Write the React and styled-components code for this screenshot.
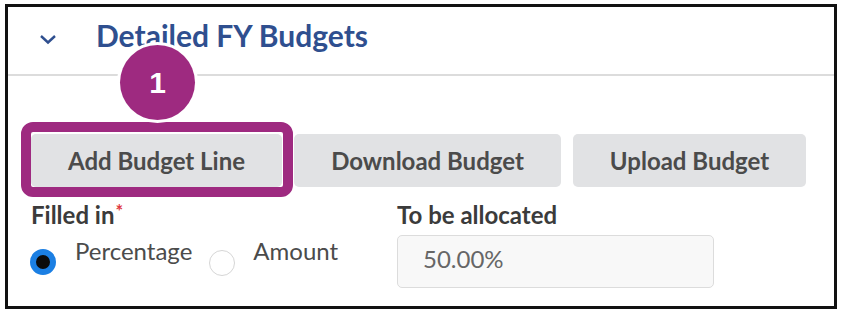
import React from "react";
import styled, { createGlobalStyle } from "styled-components";

const GlobalStyle = createGlobalStyle`
  html, body {
    margin: 0;
    padding: 0;
    background: #ffffff;
    font-family: Lato, "Noto Sans", sans-serif;
  }
`;

const Page = styled.div`
  width: 843px;
  height: 318px;
  padding: 4px 0 0 5px;
  box-sizing: border-box;
`;

const Frame = styled.div`
  position: relative;
  width: 832px;
  height: 305px;
  border: 3px solid #111;
  box-sizing: border-box;
  overflow: hidden;
`;

const Header = styled.div`
  display: flex;
  align-items: flex-start;
  height: 67px;
  border-bottom: 2px solid #dcdcdc;
  padding-left: 31px;
  box-sizing: content-box;
`;

const Chevron = styled.svg`
  width: 18px;
  height: 12px;
  margin-top: 26px;
  margin-right: 39px;
`;

const Title = styled.h2`
  margin: 10px 0 0;
  font-size: 30px;
  line-height: 36px;
  font-weight: 700;
  color: #2f4f8f;
`;

const Body = styled.div`
  padding: 58px 0 0 23px;
`;

const ButtonRow = styled.div`
  display: flex;
  gap: 12px;
`;

const Button = styled.button`
  width: ${(p) => p.$w}px;
  height: 53px;
  border: none;
  border-radius: 5px;
  background: #e1e2e4;
  color: #4b4b4b;
  font-family: Lato, "Noto Sans", sans-serif;
  font-size: 24px;
  font-weight: 700;
  padding: 0;
`;

const FieldRow = styled.div`
  display: flex;
  margin-top: 15px;
`;

const Field = styled.div`
  width: ${(p) => p.$w}px;
  display: flex;
  flex-direction: column;
`;

const Label = styled.div`
  font-size: 24px;
  font-weight: 700;
  color: #3b3b3b;
  line-height: 26px;
`;

const Required = styled.span`
  color: #e0393e;
  font-size: 18px;
  vertical-align: top;
  line-height: 18px;
  margin-left: 1px;
`;

const RadioGroup = styled.div`
  display: flex;
  align-items: flex-start;
  margin-top: 10px;
  margin-left: -1px;
`;

const RadioOption = styled.label`
  display: flex;
  align-items: flex-start;
  margin-right: 17px;
`;

const RadioDot = styled.span`
  width: 26px;
  height: 26px;
  margin-top: ${(p) => (p.$on ? 11 : 12)}px;
  margin-right: ${(p) => (p.$on ? 19 : 18)}px;
  border-radius: 50%;
  box-sizing: border-box;
  background: ${(p) => (p.$on ? "#0b0b0b" : "#ffffff")};
  border: ${(p) => (p.$on ? "6px solid #1b7fe3" : "1.5px solid #d6d6d6")};
  flex-shrink: 0;
`;

const RadioText = styled.span`
  font-size: 24px;
  color: #4b4b4b;
  line-height: 26px;
`;

const Input = styled.div`
  width: 317px;
  height: 53px;
  margin-top: 7px;
  box-sizing: border-box;
  border: 1.5px solid #dcdcdc;
  border-radius: 5px;
  background: #f8f8f8;
  color: #666;
  font-size: 24px;
  line-height: 26px;
  padding: 10px 0 0 25px;
`;

const Highlight = styled.div`
  position: absolute;
  left: 13px;
  top: 115px;
  width: 272px;
  height: 75px;
  box-sizing: border-box;
  border: 10px solid #9e2a80;
  border-radius: 12px;
`;

const Badge = styled.div`
  position: absolute;
  left: 112px;
  top: 38px;
  width: 75px;
  height: 75px;
  border-radius: 50%;
  background: #9e2a80;
  box-shadow: 0 0 0 3px #ffffff;
  color: #fff;
  font-family: "Liberation Sans", Arial, sans-serif;
  font-weight: 700;
  font-size: 30px;
  display: flex;
  align-items: center;
  justify-content: center;
`;

export default function App() {
  return (
    <>
      <GlobalStyle />
      <Page>
        <Frame>
          <Header>
            <Chevron viewBox="0 0 18 12">
              <path d="M2 3 L9 9.5 L16 3" fill="none" stroke="#2f4f8f" strokeWidth="2.4" />
            </Chevron>
            <Title>Detailed FY Budgets</Title>
          </Header>
          <Body>
            <ButtonRow>
              <Button $w={251}>Add Budget Line</Button>
              <Button $w={267}>Download Budget</Button>
              <Button $w={233}>Upload Budget</Button>
            </ButtonRow>
            <FieldRow>
              <Field $w={366}>
                <Label>
                  Filled in<Required>*</Required>
                </Label>
                <RadioGroup>
                  <RadioOption>
                    <RadioDot $on />
                    <RadioText>Percentage</RadioText>
                  </RadioOption>
                  <RadioOption>
                    <RadioDot />
                    <RadioText>Amount</RadioText>
                  </RadioOption>
                </RadioGroup>
              </Field>
              <Field $w={330}>
                <Label>To be allocated</Label>
                <Input>50.00%</Input>
              </Field>
            </FieldRow>
          </Body>
          <Highlight />
          <Badge>1</Badge>
        </Frame>
      </Page>
    </>
  );
}
